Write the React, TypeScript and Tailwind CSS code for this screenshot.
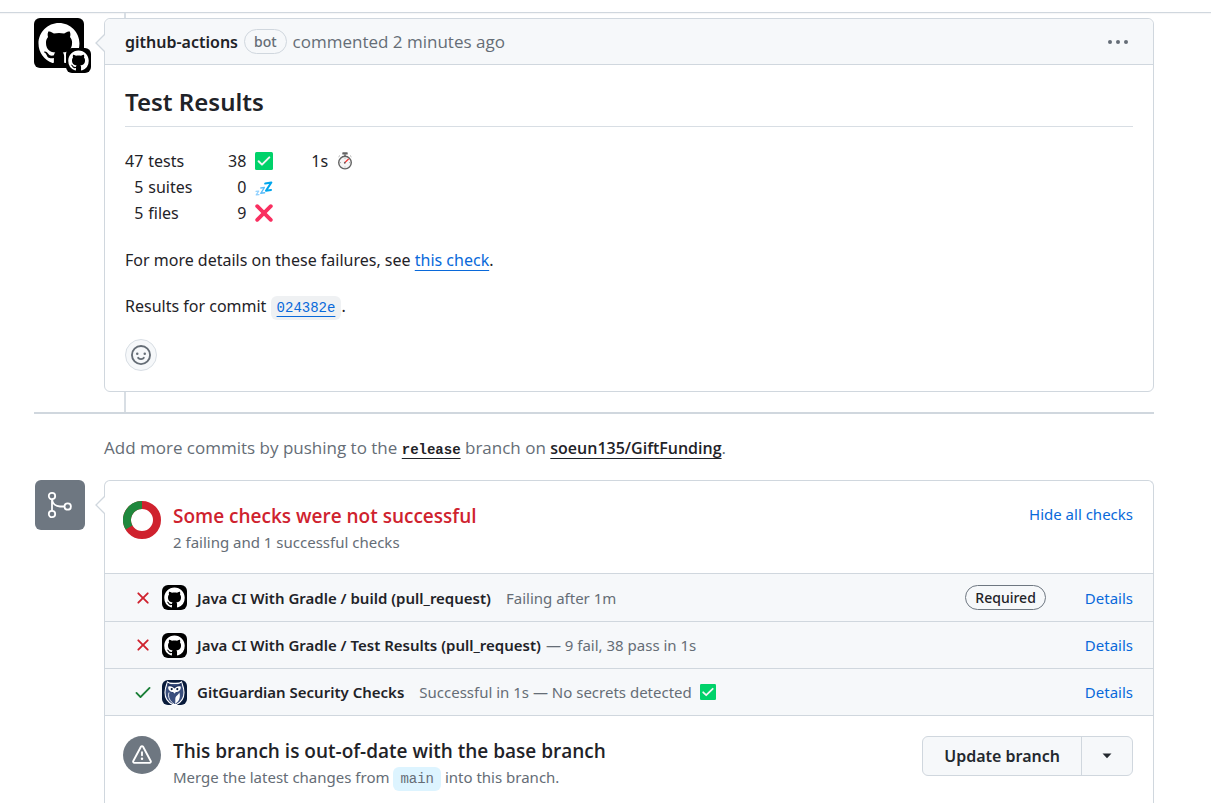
import type { ReactNode } from "react";

const PATHS = {
  mark: "M8 0c4.42 0 8 3.58 8 8a8.013 8.013 0 0 1-5.45 7.59c-.4.08-.55-.17-.55-.38 0-.27.01-1.13.01-2.2 0-.75-.25-1.23-.54-1.48 1.78-.2 3.65-.88 3.65-3.95 0-.88-.31-1.59-.82-2.15.08-.2.36-1.02-.08-2.12 0 0-.67-.22-2.2.82-.64-.18-1.32-.27-2-.27-.68 0-1.36.09-2 .27-1.53-1.03-2.2-.82-2.2-.82-.44 1.1-.16 1.92-.08 2.12-.51.56-.82 1.28-.82 2.15 0 3.06 1.86 3.75 3.64 3.95-.23.2-.44.55-.51 1.07-.46.21-1.61.55-2.33-.66-.15-.24-.6-.83-1.23-.82-.67.01-.27.38.01.53.34.19.73.9.82 1.13.16.45.68 1.31 2.69.94 0 .67.01 1.3.01 1.49 0 .21-.15.45-.55.38A7.995 7.995 0 0 1 0 8c0-4.42 3.58-8 8-8Z",
  smiley: "M8 0a8 8 0 1 1 0 16A8 8 0 0 1 8 0ZM1.5 8a6.5 6.5 0 1 0 13 0 6.5 6.5 0 0 0-13 0Zm3.82 1.636a.75.75 0 0 1 1.038.175l.007.009c.103.118.22.222.35.31.264.178.683.37 1.285.37.602 0 1.02-.192 1.285-.371.13-.088.247-.192.35-.31l.007-.008a.75.75 0 0 1 1.222.87 3.2 3.2 0 0 1-.737.678c-.63.418-1.37.638-2.127.629-.946 0-1.652-.308-2.126-.63a3.331 3.331 0 0 1-.715-.657.75.75 0 0 1 .161-1.065ZM12 7a1 1 0 1 1-2 0 1 1 0 0 1 2 0ZM5 8a1 1 0 1 1 0-2 1 1 0 0 1 0 2Z",
  alert: "M6.457 1.047c.659-1.234 2.427-1.234 3.086 0l6.082 11.378A1.75 1.75 0 0 1 14.082 15H1.918a1.75 1.75 0 0 1-1.543-2.575Zm1.763.707a.25.25 0 0 0-.44 0L1.698 13.132a.25.25 0 0 0 .22.368h12.164a.25.25 0 0 0 .22-.368Zm.53 3.996v2.5a.75.75 0 0 1-1.5 0v-2.5a.75.75 0 0 1 1.5 0ZM9 11a1 1 0 1 1-2 0 1 1 0 0 1 2 0Z",
  x: "M3.72 3.72a.75.75 0 0 1 1.06 0L8 6.94l3.22-3.22a.749.749 0 0 1 1.275.326.749.749 0 0 1-.215.734L9.06 8l3.22 3.22a.749.749 0 0 1-.326 1.275.749.749 0 0 1-.734-.215L8 9.06l-3.22 3.22a.751.751 0 0 1-1.042-.018.751.751 0 0 1-.018-1.042L6.94 8 3.72 4.78a.75.75 0 0 1 0-1.06Z",
  check: "M13.78 4.22a.75.75 0 0 1 0 1.06l-7.25 7.25a.75.75 0 0 1-1.06 0L2.22 9.28a.751.751 0 0 1 .018-1.042.751.751 0 0 1 1.042-.018L6 10.94l6.72-6.72a.75.75 0 0 1 1.06 0Z",
};

function Octicon({ name, className }: { name: keyof typeof PATHS; className: string }) {
  return (
    <svg viewBox="0 0 16 16" fill="currentColor" aria-hidden="true" className={`shrink-0 ${className}`}>
      <path d={PATHS[name]} />
    </svg>
  );
}

function GitHubAvatar({ className }: { className: string }) {
  return (
    <svg viewBox="0 0 50 50" aria-hidden="true" className={`shrink-0 bg-black ${className}`}>
      <g transform="translate(4.5 5) scale(2.56)">
        <path fill="#fff" d={PATHS.mark} />
      </g>
    </svg>
  );
}

function OwlAvatar() {
  return (
    <svg viewBox="0 0 25 25" aria-hidden="true" className="size-[25px] shrink-0 rounded-md bg-[#081a3a]">
      <path d="M5.5 2 C7 3.6 9 3.4 12.5 3.4 S18 3.6 19.5 2 C20.5 5 22 8 22 12.5 C22 18 18.5 22.5 14.5 24.5 H10.5 C6.5 22.5 3 18 3 12.5 C3 8 4.5 5 5.5 2 Z" fill="#3b4f7d" stroke="#fff" strokeWidth="1.1" />
      <path d="M5.5 2.5 L9 5 L12.5 6 L16 5 L19.5 2.5 C19.5 7 19.5 11 12.5 13 C5.5 11 5.5 7 5.5 2.5 Z" fill="#22345f" />
      <path d="M6.3 6.5 C9 5.5 11 7 12.5 8.6 C14 7 16 5.5 18.7 6.5 C19.5 10 16.5 12 14 12 L12.5 13.6 L11 12 C8.5 12 5.5 10 6.3 6.5 Z" fill="#fff" />
      <circle cx="9.7" cy="9.1" r="1.1" fill="#081a3a" />
      <circle cx="15.3" cy="9.1" r="1.1" fill="#081a3a" />
      <path d="M17.3 12.5 C19 17 17 22 12.8 24 C14 21.5 12.8 19.5 13.5 17.5 C14 15.5 16.5 15 17.3 12.5 Z" fill="#fff" />
      <path d="M7 12.5 C5.5 17 8 21.5 12 24" fill="none" stroke="#fff" strokeWidth="0.9" />
    </svg>
  );
}

function MergeIcon() {
  return (
    <svg viewBox="0 0 26 28" fill="none" stroke="currentColor" strokeWidth="1.8" aria-hidden="true" className="h-7 w-[26px]">
      <circle cx="5" cy="5" r="3.2" />
      <circle cx="5" cy="23" r="3.2" />
      <circle cx="20.7" cy="15.5" r="3.2" />
      <path d="M5 8.2 V19.8 M5 8.2 C5.5 13 9 15.5 13 15.5 H17.5" />
    </svg>
  );
}

function CheckEmoji({ className }: { className: string }) {
  return (
    <svg viewBox="0 0 18 18" role="img" aria-label="white check mark" className={className}>
      <rect width="18" height="18" rx="1.5" fill="#00d26a" />
      <path d="M3.6 9.3 L7 12.6 L14.3 5.4" fill="none" stroke="#f4f4f4" strokeWidth="2" strokeLinecap="round" strokeLinejoin="round" />
    </svg>
  );
}

function CrossEmoji() {
  return (
    <svg viewBox="0 0 18 18" role="img" aria-label="cross mark" className="size-[18px]">
      <path d="M2.2 2.2 L15.8 15.8 M15.8 2.2 L2.2 15.8" stroke="#f92f60" strokeWidth="3.8" strokeLinecap="round" />
    </svg>
  );
}

function ZzzEmoji() {
  return (
    <svg viewBox="0 0 18 18" role="img" aria-label="sleeping" className="size-[18px]" fill="none" strokeLinejoin="round" strokeLinecap="round">
      <path d="M1 13.3 L3.8 13 L1.2 16.9 L4 16.6" stroke="#8fd0ff" strokeWidth="1.2" />
      <path d="M5.8 10 L9.4 9.5 L5.8 15.3 L9.6 14.8" stroke="#5cbdfa" strokeWidth="1.4" />
      <path d="M10.2 5.5 L16.3 4.5 L11 12.7 L16 12" stroke="#00a6ed" strokeWidth="2.1" />
    </svg>
  );
}

function StopwatchEmoji() {
  return (
    <svg viewBox="0 0 18 18" role="img" aria-label="stopwatch" className="size-[18px]">
      <rect x="6.3" y="0.3" width="5.4" height="2.3" rx="0.6" fill="#636363" />
      <rect x="8" y="2" width="2" height="2" fill="#8a8a8a" />
      <path d="M2.6 4.8 L3.8 3.7 M15.4 4.8 L14.2 3.7" stroke="#999" strokeWidth="1" />
      <circle cx="9" cy="10.6" r="6.3" fill="#f4f4f4" stroke="#636363" strokeWidth="1.4" />
      <path d="M9 5.7 V6.7 M9 14.5 V15.5 M4 10.6 H5 M13 10.6 H14" stroke="#9b9b9b" strokeWidth="0.8" />
      <path d="M8.6 10.9 L12.3 7.3" stroke="#f8312f" strokeWidth="1.3" strokeLinecap="round" />
      <circle cx="8.8" cy="10.7" r="0.9" fill="#636363" />
    </svg>
  );
}

function Caret({ fill }: { fill: string }) {
  return (
    <svg viewBox="0 0 10 20" aria-hidden="true" className="absolute top-[14px] left-[-10px] h-5 w-[10px]">
      <path d="M10 1 L1 10 L10 19" fill={fill} stroke="#d0d7de" strokeWidth="1.3" />
    </svg>
  );
}

function CheckRow({ ok, avatar, name, required, children, tall }: { ok?: boolean; avatar: ReactNode; name: string; required?: boolean; children: ReactNode; tall?: boolean }) {
  return (
    <li className={`flex items-center border-t border-[#d0d7de] bg-[#f6f8fa] pr-5 pl-[28px] text-[15px] ${tall ? "h-12" : "h-[47px]"}`}>
      <Octicon name={ok ? "check" : "x"} className={`size-5 ${ok ? "text-[#1a7f37]" : "text-[#cf222e]"}`} />
      <span className="ml-[9px] flex">{avatar}</span>
      <div className="ml-[10px] flex flex-1 items-center whitespace-pre text-[#656d76]">
        <strong className="font-semibold text-[#1f2328]">{name}</strong>
        {children}
      </div>
      {required && <span className="mr-[39px] flex h-[25px] items-center rounded-full border border-[#6e7781] px-[9px] text-[14px] font-medium text-[#1f2328]">Required</span>}
      <a href="#details" className="text-[#0969da]">Details</a>
    </li>
  );
}

const results = [
  { count: 47, label: "tests", total: 38, icon: <CheckEmoji className="size-[18px]" />, time: "1s" },
  { count: 5, label: "suites", total: 0, icon: <ZzzEmoji /> },
  { count: 5, label: "files", total: 9, icon: <CrossEmoji /> },
];

export default function App() {
  return (
    <div className="flex min-h-screen flex-col bg-white font-['Noto_Sans','Open_Sans',sans-serif] text-[16px] leading-[26px] text-[#1f2328]">
      <header className="h-[13px] border-b border-[#d0d7de] shadow-[0_1px_1px_rgba(31,35,40,0.04)]" />
      <main className="flex flex-1 flex-col pr-[57px] pl-[34px]">
        <div className="ml-[90px] h-[5px] w-[2px] bg-[#d8dee4]" />
        <article className="flex">
          <a href="#github-actions" aria-label="github-actions" className="relative mr-5 block size-[50px] shrink-0">
            <GitHubAvatar className="size-[50px] rounded-md" />
            <span className="absolute top-[30px] left-8 block">
              <GitHubAvatar className="size-[25px] rounded-md" />
            </span>
          </a>
          <section className="relative min-w-0 flex-1 rounded-md border border-[#d0d7de]">
            <div className="flex h-[46px] items-center rounded-t-md border-b border-[#d0d7de] bg-[#f6f8fa] px-5 text-[#656d76]">
              <a href="#github-actions" className="font-semibold text-[#1f2328]">github-actions</a>
              <span className="mx-[6px] flex h-[25px] items-center rounded-full border border-[#d0d7de] px-[9px] text-[14px] font-medium">bot</span>
              <span className="flex-1 font-['Open_Sans',sans-serif] text-[17px]">commented 2 minutes ago</span>
              <button type="button" aria-label="Show options" className="p-1">
                <svg viewBox="0 0 22 6" fill="currentColor" className="h-[6px] w-[22px]">
                  <circle cx="3" cy="3" r="2" />
                  <circle cx="11" cy="3" r="2" />
                  <circle cx="19" cy="3" r="2" />
                </svg>
              </button>
            </div>
            <Caret fill="#f6f8fa" />
            <div className="p-5">
              <h2 className="border-b border-[#d8dee4] pb-2 text-[24px] leading-[33px] font-semibold">Test Results</h2>
              <table className="mt-[21px]">
                <tbody>
                  {results.map((r) => (
                    <tr key={r.label} className="h-[26px]">
                      <td className="w-[18px] p-0 text-right">{r.count}</td>
                      <td className="w-[84px] p-0 pl-[5px]">{r.label}</td>
                      <td className="w-[19px] p-0 text-right">{r.total}</td>
                      <td className="w-[65px] p-0 pl-[9px]">{r.icon}</td>
                      <td className="p-0">{r.time}</td>
                      <td className="p-0 pl-2">{r.time && <StopwatchEmoji />}</td>
                    </tr>
                  ))}
                </tbody>
              </table>
              <p className="mt-[21px]">
                For more details on these failures, see <a href="#check" className="text-[#0969da] underline underline-offset-4">this check</a>.
              </p>
              <p className="mt-5">
                Results for commit{" "}
                <code className="rounded-md bg-[#eff1f3] px-[6px] py-1 font-['Liberation_Mono',monospace] text-[14px] leading-none">
                  <a href="#commit" className="text-[#0969da] underline underline-offset-4">024382e</a>
                </code>
                .
              </p>
              <button type="button" aria-label="Add reaction" className="mt-5 flex size-8 items-center justify-center rounded-full border border-[#d8dee4] bg-[#f6f8fa] text-[#656d76]">
                <Octicon name="smiley" className="size-5" />
              </button>
            </div>
          </section>
        </article>
        <div className="ml-[90px] h-5 w-[2px] bg-[#d8dee4]" />
        <hr className="border-t-2 border-[#d0d7de]" />
        <p className="mt-[21px] ml-[70px] font-['Open_Sans',sans-serif] text-[17px] text-[#656d76]">
          Add more commits by pushing to the{" "}
          <a href="#release" className="font-['Liberation_Mono',monospace] text-[14px] leading-none font-bold text-[#1f2328] underline underline-offset-4">release</a>
          {" "}branch on{" "}
          <a href="#repository" className="text-[16px] leading-none font-semibold text-[#1f2328] underline underline-offset-4">soeun135/GiftFunding</a>.
        </p>
        <div className="mt-[19px] flex flex-1">
          <div className="mr-[19px] ml-px flex size-[50px] shrink-0 items-center justify-center rounded-md bg-[#6e7781] text-white">
            <MergeIcon />
          </div>
          <section className="relative min-w-0 flex-1 rounded-t-md border border-b-0 border-[#d0d7de]">
            <Caret fill="#ffffff" />
            <div className="flex h-[92px] items-start pt-5 pr-5 pl-[18px]">
              <svg viewBox="0 0 38 38" fill="none" strokeWidth="8" aria-hidden="true" className="size-[38px]">
                <circle cx="19" cy="19" r="15" stroke="#cf222e" />
                <path d="M6 26.5 A15 15 0 0 1 19 4" stroke="#1f883d" />
              </svg>
              <div className="ml-3 flex-1 pt-[2px]">
                <h3 className="font-['Open_Sans',sans-serif] text-[19px] font-semibold text-[#cf222e]">Some checks were not successful</h3>
                <p className="text-[15px] text-[#656d76]">2 failing and 1 successful checks</p>
              </div>
              <button type="button" className="text-[15px] text-[#0969da]">Hide all checks</button>
            </div>
            <ul>
              <CheckRow tall required avatar={<GitHubAvatar className="size-[25px] rounded-md" />} name="Java CI With Gradle / build (pull_request)">
                <span className="ml-[15px]">Failing after 1m</span>
              </CheckRow>
              <CheckRow avatar={<GitHubAvatar className="size-[25px] rounded-md" />} name="Java CI With Gradle / Test Results (pull_request)">
                <span className="ml-[5px]">— 9 fail, 38 pass in 1s</span>
              </CheckRow>
              <CheckRow ok avatar={<OwlAvatar />} name="GitGuardian Security Checks">
                <span className="ml-[15px]">Successful in 1s — No secrets detected</span>
                <CheckEmoji className="ml-2 size-4" />
              </CheckRow>
            </ul>
            <div className="flex items-start border-t border-[#d0d7de] pt-5 pr-5 pl-[18px]">
              <div className="flex size-[38px] shrink-0 items-center justify-center rounded-full bg-[#6e7781] text-white">
                <Octicon name="alert" className="size-5" />
              </div>
              <div className="ml-3 flex-1 pt-[2px]">
                <h3 className="font-['Open_Sans',sans-serif] text-[19px] font-semibold">This branch is out-of-date with the base branch</h3>
                <p className="text-[15px] text-[#656d76]">
                  Merge the latest changes from{" "}
                  <code className="rounded-md bg-[#ddf4ff] px-[7px] py-1 font-['Liberation_Mono',monospace] text-[14px] leading-none">main</code>
                  {" "}into this branch.
                </p>
              </div>
              <div className="flex h-10 rounded-md border border-[#d0d7de] bg-[#f6f8fa] font-semibold text-[#24292f]">
                <button type="button" className="px-[21px]">Update branch</button>
                <button type="button" aria-label="Select update method" className="flex w-[51px] items-center justify-center border-l border-[#d0d7de]">
                  <svg viewBox="0 0 10 6" className="h-[6px] w-[10px]" fill="currentColor">
                    <path d="M0.5 0.5 H9.5 L5 5.2 Z" />
                  </svg>
                </button>
              </div>
            </div>
          </section>
        </div>
      </main>
    </div>
  );
}
